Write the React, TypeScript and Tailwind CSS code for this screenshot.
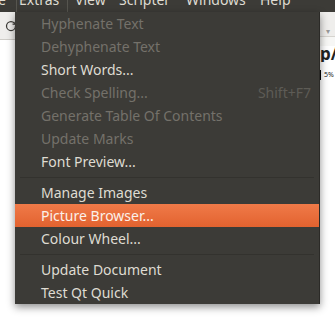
import { RotateCw } from 'lucide-react';

type Item = { label: string; disabled?: boolean; shortcut?: string; active?: boolean; sep?: boolean };

const items: Item[] = [
  { label: 'Hyphenate Text', disabled: true },
  { label: 'Dehyphenate Text', disabled: true },
  { label: 'Short Words...' },
  { label: 'Check Spelling...', disabled: true, shortcut: 'Shift+F7' },
  { label: 'Generate Table Of Contents', disabled: true },
  { label: 'Update Marks', disabled: true },
  { label: 'Font Preview...' },
  { label: '', sep: true },
  { label: 'Manage Images' },
  { label: 'Picture Browser...', active: true },
  { label: 'Colour Wheel...' },
  { label: '', sep: true },
  { label: 'Update Document' },
  { label: 'Test Qt Quick' },
];

function MenuRow({ item }: { item: Item }) {
  if (item.sep) {
    return <div className="h-[8px] flex items-center px-[5px]"><div className="h-px w-full bg-[#33322e]" /></div>;
  }
  const color = item.active ? 'text-[#fbf1ea]' : item.disabled ? 'text-[#74716a]' : 'text-[#dfdbd2]';
  return (
    <div
      className={`h-[23px] flex items-center pl-[26px] pr-[8px] ${color} ${
        item.active ? 'bg-gradient-to-b from-[#f07a48] to-[#e2622f]' : ''
      }`}
    >
      <span>{item.label}</span>
      {item.shortcut && <span className="ml-auto text-[#5e5c56]">{item.shortcut}</span>}
    </div>
  );
}

export default function App() {
  return (
    <div
      className="w-[335px] h-[322px] relative overflow-hidden bg-white"
      style={{ fontFamily: '"Noto Sans", "Open Sans", sans-serif' }}
    >
      {/* menubar */}
      <div className="h-[12px] bg-[#3c3b37] text-[#dfdbd2] text-[14px] overflow-hidden">
        <div className="flex h-[20px] leading-[16px] -mt-[8px]">
          <span className="w-[18px] -ml-[2px] pl-0">e</span>
          <span className="border-l border-r border-[#56554f] w-[52px] pl-[2px]">Extras</span>
          <span className="ml-[7px] w-[44px]">View</span>
          <span className="w-[67px]">Scripter</span>
          <span className="w-[74px]">Windows</span>
          <span>Help</span>
        </div>
      </div>

      {/* window behind the menu */}
      <div className="flex h-[310px]">
        <div className="w-[16px] flex flex-col">
          <div className="h-[28px] bg-[#efeeec] border-b border-[#cfcdc8] flex items-center justify-end">
            <RotateCw className="w-[12px] h-[12px] text-[#3c3b37] -mr-[1px]" strokeWidth={2.5} />
          </div>
          <div className="flex-1 bg-white" />
        </div>
        <div className="flex-1" />
        <div className="w-[16px] flex flex-col text-[#222]">
          <div className="h-[24px] bg-[#efeeec] flex items-end justify-end pr-[5px] text-[8px] text-[#999] leading-[10px]">▾</div>
          <div className="h-px bg-[#d6d4cf]" />
          <div className="h-[9px] bg-[#f7f7f5]" />
          <div className="h-[16px] bg-white text-[17px] font-bold leading-[16px] pl-[1px]">p/</div>
          <div className="h-[8px] bg-white" />
          <div className="h-[10px] bg-white text-[7px] pl-[3px] leading-[10px] border-l border-black ml-[1px]">5%</div>
          <div className="flex-1 bg-white" />
        </div>
      </div>

      {/* dropdown menu */}
      <div className="absolute left-[15px] top-[12px] w-[305px] bg-[#3c3b37] text-[14px] shadow-[0_3px_8px_rgba(0,0,0,0.45)] border-r border-[#2b2a27]">
        {items.map((it, i) => (
          <MenuRow key={i} item={it} />
        ))}
      </div>
    </div>
  );
}
